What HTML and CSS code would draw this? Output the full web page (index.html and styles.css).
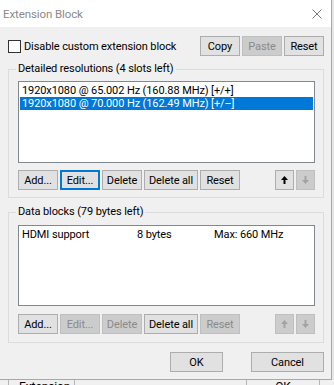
FILE: index.html
```html
<!DOCTYPE html>
<html lang="en">
<head>
  <meta charset="UTF-8">
  <title>Extension Block</title>
  <link rel="stylesheet" href="styles.css">
</head>
<body>
  <div class="dialog">
    <div class="titlebar">
      <span class="title">Extension Block</span>
      <svg class="close" width="10" height="10" viewBox="0 0 10 10"><path d="M0.5 0.5 L9.5 9.5 M9.5 0.5 L0.5 9.5" stroke="#7a7a7a" stroke-width="1" fill="none"/></svg>
    </div>
    <div class="content">
      <div class="top-row">
        <label class="check"><span class="box"></span>Disable custom extension block</label>
        <div class="btns">
          <button>Copy</button>
          <button disabled>Paste</button>
          <button>Reset</button>
        </div>
      </div>

      <fieldset class="group g1">
        <legend>Detailed resolutions (4 slots left)</legend>
        <div class="listbox l1">
          <div class="item">1920x1080 @ 65.002 Hz (160.88 MHz) [+/+]</div>
          <div class="item selected">1920x1080 @ 70.000 Hz (162.49 MHz) [+/–]</div>
        </div>
        <div class="btn-row">
          <button>Add...</button>
          <button class="focus">Edit...</button>
          <button>Delete</button>
          <button class="wide">Delete all</button>
          <button>Reset</button>
          <span class="spacer"></span>
          <button class="arrow"><svg width="7" height="8" viewBox="0 0 7 8"><path d="M3.5 0 L7 4 H4.5 V8 H2.5 V4 H0 Z" fill="#000"/></svg></button>
          <button class="arrow" disabled><svg width="7" height="8" viewBox="0 0 7 8"><path d="M3.5 8 L7 4 H4.5 V0 H2.5 V4 H0 Z" fill="#a3a3a3"/></svg></button>
        </div>
      </fieldset>

      <fieldset class="group g2">
        <legend>Data blocks (79 bytes left)</legend>
        <div class="listbox l2">
          <div class="item data-item"><span>HDMI support</span><span>8 bytes</span><span>Max: 660 MHz</span></div>
        </div>
        <div class="btn-row">
          <button>Add...</button>
          <button disabled>Edit...</button>
          <button disabled>Delete</button>
          <button class="wide">Delete all</button>
          <button disabled>Reset</button>
          <span class="spacer"></span>
          <button class="arrow" disabled><svg width="7" height="8" viewBox="0 0 7 8"><path d="M3.5 0 L7 4 H4.5 V8 H2.5 V4 H0 Z" fill="#a3a3a3"/></svg></button>
          <button class="arrow" disabled><svg width="7" height="8" viewBox="0 0 7 8"><path d="M3.5 8 L7 4 H4.5 V0 H2.5 V4 H0 Z" fill="#a3a3a3"/></svg></button>
        </div>
      </fieldset>

      <div class="footer">
        <button class="ok">OK</button>
        <button class="cancel">Cancel</button>
      </div>
    </div>
  </div>

  <div class="behind">
    <div class="cell c1">Extension</div>
    <div class="cell c2"></div>
    <div class="cell c3">OK</div>
  </div>
</body>
</html>
```

FILE: styles.css
```css
body {
  margin: 0;
  width: 334px;
  height: 385px;
  overflow: hidden;
  background-color: #e6e6e6;
  font-family: Roboto, "Liberation Sans", sans-serif;
  font-size: 11px;
  letter-spacing: -0.1px;
  color: #000;
}
.dialog {
  width: 332px;
  height: 380px;
  box-sizing: border-box;
  background-color: #f0f0f0;
  border-right: 1px solid #a8a8a8;
  border-bottom: 1px solid #a8a8a8;
  display: flex;
  flex-direction: column;
}
.titlebar {
  height: 27px;
  flex-shrink: 0;
  background-color: #fff;
  display: flex;
  align-items: center;
  justify-content: space-between;
  padding: 0 9px 0 3px;
}
.title {
  color: #8a8a8a;
  font-size: 11.5px;
}
.content {
  padding: 9px 7px 0 8px;
}
.top-row {
  display: flex;
  align-items: center;
  justify-content: space-between;
  height: 20px;
}
.check {
  display: flex;
  align-items: center;
  gap: 3px;
}
.box {
  width: 13px;
  height: 13px;
  box-sizing: border-box;
  border: 1px solid #333;
  background-color: #fff;
}
.btns {
  display: flex;
  gap: 2px;
}
button {
  font: inherit;
  letter-spacing: inherit;
  color: #000;
  width: 40px;
  height: 20px;
  box-sizing: border-box;
  padding: 0;
  background-color: #e1e1e1;
  border: 1px solid #adadad;
  border-radius: 0;
}
button:disabled {
  background-color: #cccccc;
  border-color: #bfbfbf;
  color: #8a8a8a;
}
button.focus {
  border: 2px solid #0078d7;
}
button.wide {
  width: 54px;
}
.arrow {
  width: 19px;
  display: flex;
  align-items: center;
  justify-content: center;
}
.group {
  margin: 5px 0 0;
  min-width: 0;
  border: 1px solid #dcdcdc;
  padding: 4px 8px 7px 9px;
}
.group legend {
  padding: 0 2px;
  margin-left: -2px;
  line-height: 16px;
}
.g2 {
  margin-top: 6px;
  padding-top: 5px;
  padding-bottom: 8px;
}
.listbox {
  background-color: #fff;
  border: 1px solid #828790;
  padding: 2px 1px;
  box-sizing: border-box;
}
.l1 {
  height: 82px;
}
.l2 {
  height: 81px;
}
.item {
  height: 13px;
  line-height: 13px;
  padding-left: 2px;
  white-space: nowrap;
}
.item.selected {
  background-color: #0078d7;
  color: #fff;
}
.data-item {
  display: grid;
  grid-template-columns: 115px 77px auto;
}
.btn-row {
  display: flex;
  gap: 2px;
  margin-top: 7px;
}
.g2 .btn-row {
  margin-top: 8px;
}
.spacer {
  flex: 1;
}
.footer {
  display: flex;
  justify-content: flex-end;
  gap: 28px;
  margin-top: 9px;
}
.ok {
  width: 53px;
}
.cancel {
  width: 73px;
}
.behind {
  display: flex;
  height: 5px;
  overflow: hidden;
  background-color: #f0f0f0;
}
.cell {
  border-left: 1px solid #b5b5b5;
  font-size: 12px;
  line-height: 14px;
  margin-top: -2px;
  padding-top: 2px;
}
.c1 {
  margin-left: 8px;
  width: 66px;
  padding-left: 10px;
  box-sizing: border-box;
}
.c2 {
  width: 171px;
}
.c3 {
  width: 72px;
  text-align: center;
  border-right: 1px solid #b5b5b5;
}
```
